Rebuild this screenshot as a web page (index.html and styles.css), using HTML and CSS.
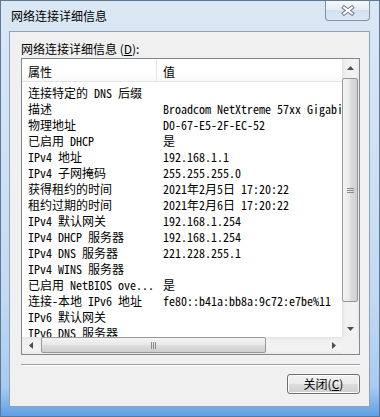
FILE: index.html
```html
<!DOCTYPE html>
<html>
<head>
    <meta charset="utf-8">
    <link rel="stylesheet" href="styles.css">
</head>
<body>
    <div class="window">
        <div class="titlebar">
            <span class="title">网络连接详细信息</span>
            <div class="close">
                <svg width="14" height="11" viewBox="0 0 14 11">
                    <path d="M3 2.5 L11 8.5 M11 2.5 L3 8.5" stroke="#6f7c8c" stroke-width="4" stroke-linecap="square"/>
                    <path d="M3 2.5 L11 8.5 M11 2.5 L3 8.5" stroke="#ffffff" stroke-width="2" stroke-linecap="square"/>
                </svg>
            </div>
        </div>
        <div class="client">
            <div class="caption">网络连接详细信息 (<u>D</u>):</div>
            <div class="listbox">
                <div class="view">
                    <div class="head">
                        <span class="c1">属性</span><span class="c2">值</span>
                    </div>
                    <div class="rows">
                        <div class="row"><span class="c1">连接特定的 DNS 后缀</span><span class="c2"></span></div>
                        <div class="row"><span class="c1">描述</span><span class="c2">Broadcom NetXtreme 57xx Gigabit Controller</span></div>
                        <div class="row"><span class="c1">物理地址</span><span class="c2">D0-67-E5-2F-EC-52</span></div>
                        <div class="row"><span class="c1">已启用 DHCP</span><span class="c2">是</span></div>
                        <div class="row"><span class="c1">IPv4 地址</span><span class="c2">192.168.1.1</span></div>
                        <div class="row"><span class="c1">IPv4 子网掩码</span><span class="c2">255.255.255.0</span></div>
                        <div class="row"><span class="c1">获得租约的时间</span><span class="c2">2021年2月5日 17:20:22</span></div>
                        <div class="row"><span class="c1">租约过期的时间</span><span class="c2">2021年2月6日 17:20:22</span></div>
                        <div class="row"><span class="c1">IPv4 默认网关</span><span class="c2">192.168.1.254</span></div>
                        <div class="row"><span class="c1">IPv4 DHCP 服务器</span><span class="c2">192.168.1.254</span></div>
                        <div class="row"><span class="c1">IPv4 DNS 服务器</span><span class="c2">221.228.255.1</span></div>
                        <div class="row"><span class="c1">IPv4 WINS 服务器</span><span class="c2"></span></div>
                        <div class="row"><span class="c1">已启用 NetBIOS ove...</span><span class="c2">是</span></div>
                        <div class="row"><span class="c1">连接-本地 IPv6 地址</span><span class="c2">fe80::b41a:bb8a:9c72:e7be%11</span></div>
                        <div class="row"><span class="c1">IPv6 默认网关</span><span class="c2"></span></div>
                        <div class="row"><span class="c1">IPv6 DNS 服务器</span><span class="c2"></span></div>
                    </div>
                </div>
                <div class="vscroll">
                    <div class="arrow">
                        <svg width="7" height="4" viewBox="0 0 7 4"><polygon points="3.5,0 7,4 0,4" fill="#4d4d4d"/></svg>
                    </div>
                    <div class="track">
                        <div class="vthumb">
                            <svg width="7" height="5" viewBox="0 0 7 5">
                                <rect x="0" y="0" width="7" height="1" fill="#8a8a8a"/>
                                <rect x="0" y="2" width="7" height="1" fill="#8a8a8a"/>
                                <rect x="0" y="4" width="7" height="1" fill="#8a8a8a"/>
                            </svg>
                        </div>
                    </div>
                    <div class="arrow">
                        <svg width="7" height="4" viewBox="0 0 7 4"><polygon points="0,0 7,0 3.5,4" fill="#4d4d4d"/></svg>
                    </div>
                </div>
                <div class="hscroll">
                    <div class="arrow">
                        <svg width="4" height="7" viewBox="0 0 4 7"><polygon points="0,3.5 4,0 4,7" fill="#4d4d4d"/></svg>
                    </div>
                    <div class="track">
                        <div class="hthumb">
                            <svg width="5" height="7" viewBox="0 0 5 7">
                                <rect x="0" y="0" width="1" height="7" fill="#8a8a8a"/>
                                <rect x="2" y="0" width="1" height="7" fill="#8a8a8a"/>
                                <rect x="4" y="0" width="1" height="7" fill="#8a8a8a"/>
                            </svg>
                        </div>
                    </div>
                    <div class="arrow">
                        <svg width="4" height="7" viewBox="0 0 4 7"><polygon points="0,0 4,3.5 0,7" fill="#4d4d4d"/></svg>
                    </div>
                </div>
                <div class="corner"></div>
            </div>
            <div class="sep"></div>
            <div class="buttons">
                <div class="btn">关闭(<u>C</u>)</div>
            </div>
        </div>
    </div>
</body>
</html>
```

FILE: styles.css
```css
body {
    margin: 0;
    font-family: "Noto Sans CJK SC", sans-serif;
    font-size: 12px;
    color: #000000;
}
.window {
    width: 380px;
    height: 417px;
    box-sizing: border-box;
    border: 1px solid #5d7796;
    padding: 0 9px 9px 8px;
    display: flex;
    flex-direction: column;
    background: linear-gradient(#dce7f4 0, #d2e2f4 30%, #c4daf2 70%, #a9cbf0 93%, #5f9fe4 100%);
}
.titlebar {
    height: 30px;
    display: flex;
    justify-content: space-between;
    align-items: flex-start;
    flex-shrink: 0;
}
.title {
    margin-top: 7px;
    padding-left: 2px;
    line-height: 16px;
}
.close {
    width: 43px;
    height: 19px;
    border: 1px solid #8293a8;
    border-top: none;
    border-radius: 0 0 4px 4px;
    background: linear-gradient(#f6f9fc, #e3ebf5 50%, #d3e0ef 50%, #dbe7f5);
    display: flex;
    align-items: center;
    justify-content: center;
}
.close svg { display: block; }
.client {
    flex: 1;
    border: 1px solid #8ea2bc;
    background: #f0f0f0;
    padding: 9px 9px 0 11px;
    display: flex;
    flex-direction: column;
}
.caption { line-height: 16px; }
.caption u, .btn u { text-decoration-thickness: 1px; }
.listbox {
    margin-top: 1px;
    height: 297px;
    box-sizing: border-box;
    border: 1px solid #828790;
    background: #ffffff;
    display: grid;
    grid-template-columns: 1fr 17px;
    grid-template-rows: 1fr 17px;
}
.view {
    overflow: hidden;
    min-width: 0;
    min-height: 0;
    font-family: "Noto Sans Mono CJK SC", "Liberation Mono", "Noto Sans CJK SC", monospace;
    font-size: 12px;
}
.head {
    display: flex;
    height: 22px;
    border-bottom: 1px solid #e5e5e5;
    background: linear-gradient(#ffffff, #ffffff 60%, #f7f8fa);
}
.head span { padding-top: 5px; line-height: 16px; }
.head .c1 { border-right: 1px solid #e5e5e5; width: 128px; }
.rows { padding-top: 3px; }
.row {
    display: flex;
    height: 16px;
    line-height: 16px;
    white-space: nowrap;
}
.c1 {
    width: 129px;
    padding-left: 6px;
    flex-shrink: 0;
}
.c2 {
    padding-left: 6px;
    flex: 1;
    overflow: hidden;
}
.vscroll, .hscroll {
    display: flex;
    background: #eeeeee;
}
.vscroll {
    flex-direction: column;
    background: linear-gradient(90deg, #e3e3e3, #f0f0f0 20%, #f2f2f2 80%, #e8e8e8);
}
.hscroll {
    background: linear-gradient(#e3e3e3, #f0f0f0 20%, #f2f2f2 80%, #e8e8e8);
}
.arrow {
    width: 17px;
    height: 17px;
    flex-shrink: 0;
    display: flex;
    align-items: center;
    justify-content: center;
}
.arrow svg { display: block; }
.track { flex: 1; display: flex; }
.vscroll .track { flex-direction: column; }
.vthumb, .hthumb {
    box-sizing: border-box;
    border: 1px solid #979797;
    border-radius: 2px;
    display: flex;
    align-items: center;
    justify-content: center;
}
.vthumb {
    margin: 2px 0 0 0;
    width: 16px;
    height: 224px;
    background: linear-gradient(90deg, #f4f4f4, #e9e9e9 45%, #dcdcdc 55%, #cfcfcf);
}
.hthumb {
    margin: 0 0 0 2px;
    width: 225px;
    height: 16px;
    background: linear-gradient(#f4f4f4, #e9e9e9 45%, #dcdcdc 55%, #cfcfcf);
}
.corner { background: #f0f0f0; }
.sep {
    margin-top: 9px;
    border-top: 1px solid #a0a0a0;
    border-bottom: 1px solid #ffffff;
}
.buttons {
    display: flex;
    justify-content: flex-end;
    margin-top: 8px;
}
.btn {
    width: 73px;
    height: 20px;
    box-sizing: border-box;
    border: 1px solid #707070;
    border-radius: 3px;
    box-shadow: inset 0 0 0 1px #fcfcfc;
    background: linear-gradient(#f2f2f2, #ebebeb 50%, #dddddd 50%, #cfcfcf);
    display: flex;
    align-items: center;
    justify-content: center;
    line-height: 16px;
}
```
